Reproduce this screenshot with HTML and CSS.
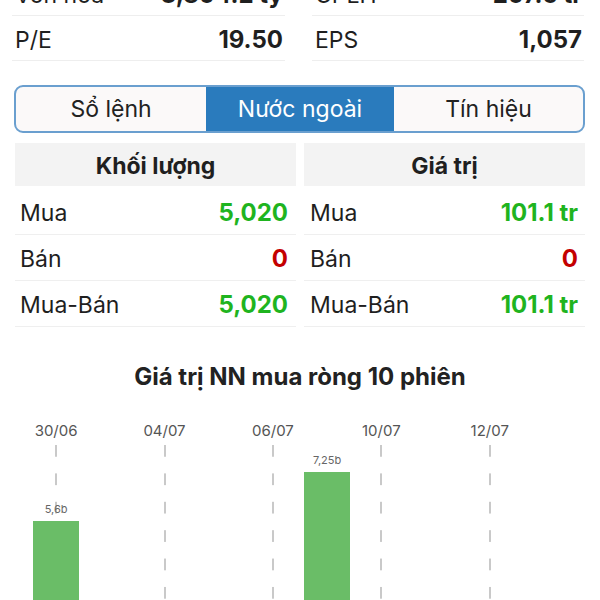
FILE: index.html
```html
<!DOCTYPE html>
<html lang="vi">
<head>
<meta charset="utf-8">
<title>Nước ngoài</title>
<link rel="stylesheet" href="styles.css">
</head>
<body>
<div class="page">
  <div class="stats">
    <div class="stat"><span class="lbl">Vốn hoá</span><span class="val">3,804.2 tỷ</span></div>
    <div class="stat"><span class="lbl">CPLH</span><span class="val">207.5 tr</span></div>
    <div class="stat"><span class="lbl">P/E</span><span class="val">19.50</span></div>
    <div class="stat"><span class="lbl">EPS</span><span class="val">1,057</span></div>
  </div>

  <div class="tabs">
    <div class="tab">Sổ lệnh</div>
    <div class="tab active">Nước ngoài</div>
    <div class="tab">Tín hiệu</div>
  </div>

  <div class="tables">
    <div class="tbl">
      <div class="th">Khối lượng</div>
      <div class="tr"><span class="lbl">Mua</span><span class="val up">5,020</span></div>
      <div class="tr"><span class="lbl">Bán</span><span class="val down">0</span></div>
      <div class="tr"><span class="lbl">Mua-Bán</span><span class="val up">5,020</span></div>
    </div>
    <div class="tbl">
      <div class="th">Giá trị</div>
      <div class="tr"><span class="lbl">Mua</span><span class="val up">101.1 tr</span></div>
      <div class="tr"><span class="lbl">Bán</span><span class="val down">0</span></div>
      <div class="tr"><span class="lbl">Mua-Bán</span><span class="val up">101.1 tr</span></div>
    </div>
  </div>

  <h2 class="title">Giá trị NN mua ròng 10 phiên</h2>

  <div class="chart">
    <div class="slot tick"><div class="date">30/06</div><div class="plot"><span class="bval">5,6b</span><div class="bar" style="height:166px"></div></div></div>
    <div class="slot"><div class="date"></div><div class="plot"></div></div>
    <div class="slot tick"><div class="date">04/07</div><div class="plot"></div></div>
    <div class="slot"><div class="date"></div><div class="plot"></div></div>
    <div class="slot tick"><div class="date">06/07</div><div class="plot"></div></div>
    <div class="slot"><div class="date"></div><div class="plot"><span class="bval">7,25b</span><div class="bar" style="height:215px"></div></div></div>
    <div class="slot tick"><div class="date">10/07</div><div class="plot"></div></div>
    <div class="slot"><div class="date"></div><div class="plot"></div></div>
    <div class="slot tick"><div class="date">12/07</div><div class="plot"></div></div>
    <div class="slot"><div class="date"></div><div class="plot"></div></div>
  </div>
</div>
</body>
</html>
```
FILE: styles.css
```css
html, body {
  margin: 0;
  padding: 0;
  overflow: hidden;
  background: #ffffff;
}
body {
  font-family: Inter, "Noto Sans", "Liberation Sans", sans-serif;
  color: #1f1f1f;
}
.page {
  width: 600px;
}
.stats {
  display: grid;
  grid-template-columns: 273px 272px;
  column-gap: 27px;
  margin: -29px 0 0 12px;
}
.stat {
  box-sizing: border-box;
  height: 45px;
  border-bottom: 1px solid #eeeeee;
  display: flex;
  justify-content: space-between;
  align-items: center;
  padding: 3px 2px 0 3px;
  font-size: 23px;
}
.stat .val {
  font-weight: 700;
  font-size: 24px;
}
.tabs {
  margin: 24px 0 0 14px;
  width: 571px;
  height: 48px;
  box-sizing: border-box;
  border: 2px solid #6a9fcf;
  border-radius: 9px;
  overflow: hidden;
  display: grid;
  grid-template-columns: 190px 188px 1fr;
  background: #fbf9f9;
}
.tab {
  display: flex;
  align-items: center;
  justify-content: center;
  font-size: 23px;
  color: #222;
}
.tab.active {
  background: #2a7bbd;
  color: #ffffff;
}
.tables {
  margin: 10px 0 0 15px;
  display: grid;
  grid-template-columns: 281px 281px;
  column-gap: 8px;
}
.th {
  height: 43px;
  box-sizing: border-box;
  padding-top: 3px;
  background: #f3f3f3;
  display: flex;
  align-items: center;
  justify-content: center;
  font-size: 23px;
  font-weight: 700;
  margin-bottom: 3px;
}
.tr {
  box-sizing: border-box;
  height: 46px;
  border-bottom: 1px solid #efefef;
  display: flex;
  justify-content: space-between;
  align-items: center;
  padding: 2px 8px 0 5px;
  font-size: 23px;
}
.tbl + .tbl .tr {
  padding: 2px 7px 0 6px;
}
.tr .val {
  font-weight: 700;
  font-size: 24px;
}
.up { color: #1fb41f; }
.down { color: #c40000; }
.title {
  margin: 34px 0 0 0;
  height: 32px;
  line-height: 32px;
  text-align: center;
  font-size: 24px;
  font-weight: 700;
  color: #222;
}
.chart {
  margin: 27px 0 0 29px;
  width: 542px;
  height: 267px;
  display: flex;
}
.slot {
  flex: 1;
  display: flex;
  flex-direction: column;
  align-items: stretch;
}
.date {
  height: 22px;
  line-height: 22px;
  margin-bottom: 3px;
  text-align: center;
  font-size: 15px;
  color: #555;
  white-space: nowrap;
}
.plot {
  flex: 1;
  display: flex;
  flex-direction: column;
  justify-content: flex-end;
  align-items: center;
}
.tick .plot {
  background-image: linear-gradient(to bottom, #c9c9c9 12px, transparent 12px);
  background-size: 2px 28.4px;
  background-repeat: repeat-y;
  background-position: center top;
}
.bval {
  font-size: 11px;
  line-height: 14px;
  color: #666;
  margin-bottom: 5px;
}
.bar {
  width: 46px;
  background: #6abd67;
}
```
